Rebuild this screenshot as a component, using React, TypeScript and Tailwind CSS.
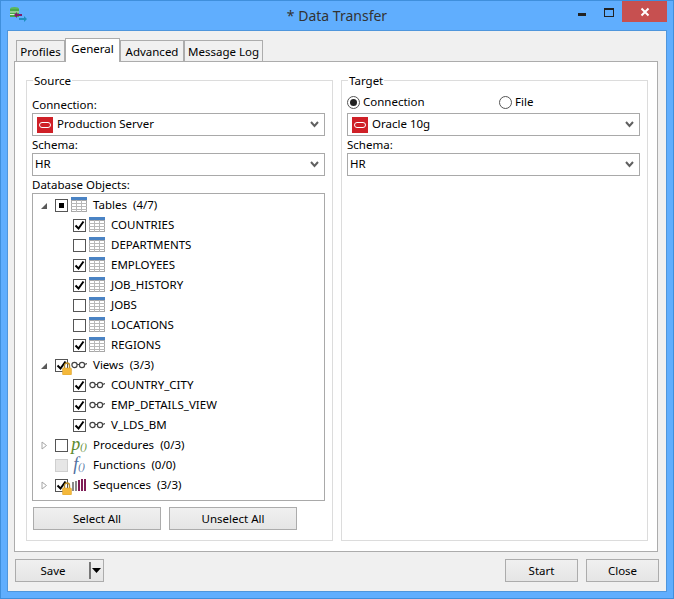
import type { ReactNode } from "react";

const font = "[font-family:'Noto_Sans',sans-serif]";

function OracleIcon() {
  return (
    <span className="flex h-[16px] w-[16px] shrink-0 items-center justify-center bg-[#cf2027]">
      <span className="h-[6px] w-[12px] rounded-[3px] border border-white" />
    </span>
  );
}

function Combo({ icon, text }: { icon?: boolean; text: string }) {
  return (
    <div className="flex h-[23px] items-center border border-[#a9a9a9] bg-white pl-[2px] pr-[5px]">
      {icon && (
        <span className="ml-[2px] mr-[4px]">
          <OracleIcon />
        </span>
      )}
      <span className="flex-1 pb-px">{text}</span>
      <svg width="9" height="7" viewBox="0 0 9 7">
        <path d="M1 1l3.5 4L8 1" fill="none" stroke="#606060" strokeWidth="2" />
      </svg>
    </div>
  );
}

function TableIcon() {
  return (
    <svg width="16" height="16" viewBox="0 0 16 16" className="shrink-0">
      <rect x="0" y="0" width="16" height="3" fill="#4a83c4" />
      <rect x="0.5" y="3.5" width="15" height="11" fill="#fff" stroke="#a8a8a8" />
      <path d="M5.5 3v12M10.5 3v12M0 6.5h16M0 9.5h16M0 12.5h16" stroke="#b8b8b8" />
    </svg>
  );
}

function GlassesIcon() {
  return (
    <svg width="16" height="16" viewBox="0 0 16 16" className="shrink-0">
      <circle cx="3.5" cy="8" r="2.6" fill="none" stroke="#444" strokeWidth="1.2" />
      <circle cx="11" cy="8" r="2.6" fill="none" stroke="#444" strokeWidth="1.2" />
      <path d="M6 7.5h2.5M13.5 7.5l2.5-1" stroke="#444" strokeWidth="1.2" />
    </svg>
  );
}

function SequenceIcon() {
  return (
    <svg width="16" height="16" viewBox="0 0 16 16" className="shrink-0">
      <path d="M2 5v9M5 4v10" stroke="#8a8a8a" strokeWidth="2" />
      <path d="M8 3v11M11 2v12M14 2v12" stroke="#7f1d56" strokeWidth="2" />
    </svg>
  );
}

function FuncIcon({ color, letter }: { color: string; letter: string }) {
  return (
    <span
      className={`w-[16px] shrink-0 whitespace-nowrap text-center text-[18px] leading-[16px] italic [font-family:'Liberation_Serif',serif] ${color}`}
    >
      {letter}
      <span className="text-[10px]">()</span>
    </span>
  );
}

function Lock() {
  return (
    <svg width="10" height="13" viewBox="0 0 10 13" className="absolute left-[6px] top-[2px]">
      <path d="M2.5 6V3.5a2.5 2.5 0 0 1 5 0V6" fill="none" stroke="#b98a22" strokeWidth="1.4" />
      <rect x="0.5" y="6" width="9" height="7" rx="1" fill="#f4b83a" stroke="#d9a02c" strokeWidth="0.5" />
    </svg>
  );
}

type Check = "on" | "off" | "mixed" | "disabled";

function CheckBox({ state, locked }: { state: Check; locked?: boolean }) {
  return (
    <span
      className={`relative flex h-[13px] w-[13px] shrink-0 items-center justify-center border ${
        state === "disabled" ? "border-[#cfcfcf] bg-[#e6e6e6]" : "border-[#555] bg-white"
      }`}
    >
      {state === "on" && (
        <svg width="11" height="11" viewBox="0 0 11 11">
          <path d="M1.5 5.5l3 3 5-7" fill="none" stroke="#000" strokeWidth="2" />
        </svg>
      )}
      {state === "mixed" && <span className="h-[5px] w-[5px] bg-black" />}
      {locked && <Lock />}
    </span>
  );
}

function Expander({ open }: { open: boolean }) {
  return (
    <svg width="7" height="9" viewBox="0 0 7 9" className="mr-[7px] shrink-0">
      {open ? (
        <path d="M6 2v6H0z" fill="#595959" />
      ) : (
        <path d="M1 1l4.5 3.5L1 8z" fill="#fff" stroke="#a6a6a6" />
      )}
    </svg>
  );
}

function GroupRow({
  open,
  state,
  locked,
  icon,
  label,
  count,
}: {
  open?: boolean;
  state: Check;
  locked?: boolean;
  icon: ReactNode;
  label: string;
  count: string;
}) {
  return (
    <div className="flex h-[20px] items-center pl-[8px]">
      {open === undefined ? <span className="mr-[7px] w-[7px]" /> : <Expander open={open} />}
      <CheckBox state={state} locked={locked} />
      <span className="ml-[3px] mr-[6px] flex w-[16px] justify-center">{icon}</span>
      <span className="whitespace-pre">
        {label}  {count}
      </span>
    </div>
  );
}

function ChildRow({ state, icon, label }: { state: Check; icon: ReactNode; label: string }) {
  return (
    <div className="flex h-[20px] items-center pl-[40px]">
      <CheckBox state={state} />
      <span className="ml-[3px] mr-[6px]">{icon}</span>
      <span>{label}</span>
    </div>
  );
}

function Btn({ children, className }: { children: ReactNode; className: string }) {
  return (
    <button
      className={`flex h-[23px] items-center justify-center border border-[#acacac] bg-gradient-to-b from-[#f0f0f0] to-[#e5e5e5] text-black ${className}`}
    >
      {children}
    </button>
  );
}

function Tab({ label, active, className }: { label: string; active?: boolean; className: string }) {
  return (
    <div
      className={`flex items-center justify-center border border-[#acacac] ${
        active
          ? "relative z-10 -mb-px h-[24px] border-b-0 bg-white pb-[3px]"
          : "h-[21px] border-b-0 bg-[#f0f0f0] pt-px"
      } ${className}`}
    >
      {label}
    </div>
  );
}

function Group({ title, children, className }: { title: string; children: ReactNode; className: string }) {
  return (
    <div className={`relative flex flex-col border border-[#dcdcdc] px-[5px] ${className}`}>
      <span className="absolute left-[6px] top-[-8px] bg-white px-px leading-[16px]">{title}</span>
      {children}
    </div>
  );
}

function Label({ children }: { children: ReactNode }) {
  return <div className="h-[17px] leading-[18px]">{children}</div>;
}

function Radio({ on, label, className }: { on?: boolean; label: string; className: string }) {
  return (
    <div className={`flex items-center ${className}`}>
      <span className="mr-[3px] flex h-[13px] w-[13px] items-center justify-center rounded-full border border-[#555] bg-white">
        {on && <span className="h-[7px] w-[7px] rounded-full bg-[#222]" />}
      </span>
      {label}
    </div>
  );
}

const tables: [string, Check][] = [
  ["COUNTRIES", "on"],
  ["DEPARTMENTS", "off"],
  ["EMPLOYEES", "on"],
  ["JOB_HISTORY", "on"],
  ["JOBS", "off"],
  ["LOCATIONS", "off"],
  ["REGIONS", "on"],
];

export default function App() {
  return (
    <div
      className={`flex h-[599px] w-[674px] flex-col border border-[#3f8fdc] bg-[#60aefe] text-[11.5px] text-black ${font}`}
    >
      {/* Title bar */}
      <div className="grid h-[29px] grid-cols-[1fr_auto_1fr] items-start">
        <div className="pl-[8px] pt-[5px]">
          <svg width="18" height="18" viewBox="0 0 18 18">
            <ellipse cx="5.5" cy="3" rx="4.5" ry="2" fill="#5cb85c" />
            <rect x="1" y="3" width="9" height="8" fill="#4aa84a" />
            <path d="M1 6h9M1 8.5h9" stroke="#d8f0d8" />
            <path d="M5 9l3-3v2h5v2H8v2z" fill="#7f1d6b" />
            <path d="M18 13l-3 3v-2h-5v-2h5v-2z" fill="#1f8fc0" />
          </svg>
        </div>
        <div className="pt-[4px] text-[14px] leading-[22px] text-[#333]">* Data Transfer</div>
        <div className="flex items-start justify-end pr-[6px]">
          <span className="mr-[18px] mt-[12px] h-[3px] w-[8px] bg-[#222]" />
          <span className="mr-[8px] mt-[7px] h-[9px] w-[10px] border border-t-2 border-[#222]" />
          <span className="flex h-[21px] w-[45px] items-center justify-center bg-[#c75050]">
            <svg width="10" height="10" viewBox="0 0 10 10">
              <path d="M1.5 1.5l7 7M8.5 1.5l-7 7" stroke="#fff" strokeWidth="2" />
            </svg>
          </span>
        </div>
      </div>

      {/* Client area */}
      <div className="mx-[6px] mb-[6px] flex flex-1 flex-col border border-[#4f96dc] bg-[#f0f0f0] pl-[6px] pr-[8px]">
        <div className="flex h-[30px] items-end pl-[2px]">
          <Tab label="Profiles" className="w-[49px]" />
          <Tab label="General" active className="w-[55px]" />
          <Tab label="Advanced" className="w-[64px]" />
          <Tab label="Message Log" className="w-[79px]" />
        </div>

        <div className="flex h-[491px] gap-[8px] border border-[#acacac] bg-white pl-[11px] pr-[8px] pt-[18px]">
          <Group title="Source" className="h-[461px] w-[307px] pt-[15px]">
            <Label>Connection:</Label>
            <div className="w-[293px]">
              <Combo icon text="Production Server" />
            </div>
            <Label>Schema:</Label>
            <div className="w-[293px]">
              <Combo text="HR" />
            </div>
            <Label>Database Objects:</Label>
            <div className="h-[308px] w-[293px] border border-[#a9a9a9] pt-[1px]">
              <GroupRow open state="mixed" icon={<TableIcon />} label="Tables" count="(4/7)" />
              {tables.map(([name, state]) => (
                <ChildRow key={name} state={state} icon={<TableIcon />} label={name} />
              ))}
              <GroupRow open state="on" locked icon={<GlassesIcon />} label="Views" count="(3/3)" />
              <ChildRow state="on" icon={<GlassesIcon />} label="COUNTRY_CITY" />
              <ChildRow state="on" icon={<GlassesIcon />} label="EMP_DETAILS_VIEW" />
              <ChildRow state="on" icon={<GlassesIcon />} label="V_LDS_BM" />
              <GroupRow
                open={false}
                state="off"
                icon={<FuncIcon color="text-[#5c8a2e]" letter="p" />}
                label="Procedures"
                count="(0/3)"
              />
              <GroupRow
                state="disabled"
                icon={<FuncIcon color="text-[#4f6f9f]" letter="f" />}
                label="Functions"
                count="(0/0)"
              />
              <GroupRow open={false} state="on" locked icon={<SequenceIcon />} label="Sequences" count="(3/3)" />
            </div>
            <div className="mt-[6px] flex gap-[8px] pl-px">
              <Btn className="w-[128px]">Select All</Btn>
              <Btn className="w-[128px]">Unselect All</Btn>
            </div>
          </Group>

          <Group title="Target" className="h-[461px] w-[307px] pt-[11px]">
            <div className="mb-px flex h-[20px] items-center">
              <Radio on label="Connection" className="w-[152px]" />
              <Radio label="File" className="" />
            </div>
            <div className="w-[293px]">
              <Combo icon text="Oracle 10g" />
            </div>
            <Label>Schema:</Label>
            <div className="w-[293px]">
              <Combo text="HR" />
            </div>
          </Group>
        </div>

        <div className="flex items-start pl-px pt-[7px]">
          <Btn className="relative w-[89px] pr-[13px]">
            Save
            <span className="absolute right-[12px] top-[2px] h-[17px] w-[2px] bg-[#777]" />
            <svg width="9" height="5" viewBox="0 0 9 5" className="absolute right-[2px] top-[8px]">
              <path d="M0 0h9L4.5 5z" fill="#000" />
            </svg>
          </Btn>
          <div className="ml-auto flex gap-[8px]">
            <Btn className="w-[73px]">Start</Btn>
            <Btn className="-mr-px w-[73px]">Close</Btn>
          </div>
        </div>
      </div>
    </div>
  );
}
